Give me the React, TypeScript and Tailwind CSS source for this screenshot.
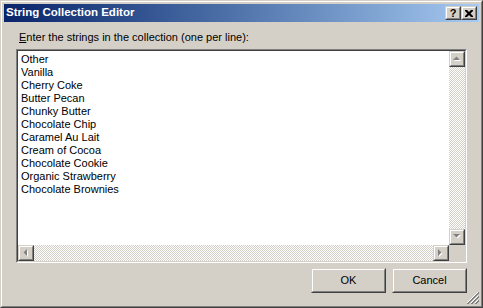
import React from 'react';

const flavors = [
  'Other',
  'Vanilla',
  'Cherry Coke',
  'Butter Pecan',
  'Chunky Butter',
  'Chocolate Chip',
  'Caramel Au Lait',
  'Cream of Cocoa',
  'Chocolate Cookie',
  'Organic Strawberry',
  'Chocolate Brownies',
];

const font = { fontFamily: '"Liberation Sans", Arial, sans-serif' };

function Raised({ className = '', children }: { className?: string; children?: React.ReactNode }) {
  return (
    <div className={`border border-t-[#d4d0c8] border-l-[#d4d0c8] border-r-[#404040] border-b-[#404040] bg-[#d4d0c8] ${className}`}>
      <div className="flex h-full w-full items-center justify-center border border-t-white border-l-white border-r-[#808080] border-b-[#808080]">
        {children}
      </div>
    </div>
  );
}

function Arrow({ dir }: { dir: 'up' | 'down' | 'left' | 'right' }) {
  const pts = {
    up: '0,4 7,4 3.5,0.5',
    down: '0,0 7,0 3.5,3.5',
    left: '4,0 4,7 0.5,3.5',
    right: '0,0 0,7 3.5,3.5',
  }[dir];
  const horiz = dir === 'left' || dir === 'right';
  return (
    <svg width={horiz ? 6 : 9} height={horiz ? 9 : 6} viewBox={horiz ? '0 0 6 9' : '0 0 9 6'}>
      <polygon points={pts} fill="#ffffff" transform="translate(1,1)" />
      <polygon points={pts} fill="#808080" />
    </svg>
  );
}

const checker =
  'bg-[repeating-conic-gradient(#d4d0c8_0%_25%,#ffffff_0%_50%)] bg-[length:2px_2px]';

export default function App() {
  return (
    <div className="h-[308px] w-[483px] overflow-hidden bg-[#d4d0c8] text-[11px] text-black" style={font}>
      <div className="flex h-full w-full flex-col border border-t-[#d4d0c8] border-l-[#d4d0c8] border-r-[#404040] border-b-[#404040]">
        <div className="flex h-full w-full flex-col border border-t-white border-l-white border-r-[#808080] border-b-[#808080] p-[2px]">
          {/* title bar */}
          <div className="flex h-[18px] shrink-0 items-center bg-gradient-to-r from-[#0a246a] to-[#a6caf0] pl-[2px] pr-[2px]">
            <span className="flex-1 text-[11.5px] font-bold leading-none text-white">String Collection Editor</span>
            <Raised className="h-[14px] w-[16px]">
              <span className="text-[11px] font-bold leading-none">?</span>
            </Raised>
            <Raised className="h-[14px] w-[16px]">
              <svg width="8" height="7" viewBox="0 0 8 7">
                <path d="M0 0h2l2 2 2-2h2v1l-2.5 2.5L8 6v1H6L4 5 2 7H0V6l2.5-2.5L0 1z" fill="#000" />
              </svg>
            </Raised>
          </div>

          {/* body */}
          <div className="relative flex flex-1 flex-col px-3 pt-[9px]">
            <div className="h-[13px] pl-[3px] leading-[13px]">
              <span className="underline">E</span>nter the strings in the collection (one per line):
            </div>

            <div className="mt-[5px] h-[214px] border border-t-[#808080] border-l-[#808080] border-r-white border-b-white">
              <div className="grid h-full grid-cols-[1fr_16px] grid-rows-[1fr_16px] border border-t-[#404040] border-l-[#404040] border-r-[#d4d0c8] border-b-[#d4d0c8] bg-white">
                <div className="pl-[3px] pt-[2px] leading-[13px]">
                  {flavors.map((f) => (
                    <div key={f}>{f}</div>
                  ))}
                </div>
                <div className={`flex flex-col ${checker}`}>
                  <Raised className="h-[16px] w-[16px]">
                    <Arrow dir="up" />
                  </Raised>
                  <div className="flex-1" />
                  <Raised className="h-[16px] w-[16px]">
                    <Arrow dir="down" />
                  </Raised>
                </div>
                <div className={`flex ${checker}`}>
                  <Raised className="h-[16px] w-[16px]">
                    <Arrow dir="left" />
                  </Raised>
                  <div className="flex-1" />
                  <Raised className="h-[16px] w-[16px]">
                    <Arrow dir="right" />
                  </Raised>
                </div>
                <div className="bg-[#d4d0c8]" />
              </div>
            </div>

            <div className="mt-[5px] flex justify-end gap-[6px]">
              <Raised className="h-[25px] w-[75px]">OK</Raised>
              <Raised className="h-[25px] w-[75px]">Cancel</Raised>
            </div>

            {/* size grip */}
            <svg className="absolute bottom-0 right-0" width="13" height="13" viewBox="0 0 13 13">
              <path d="M12 1L1 12M12 5L5 12M12 9L9 12" stroke="#ffffff" strokeWidth="1" />
              <path d="M13 1L1 13M13 2L2 13M13 5L5 13M13 6L6 13M13 9L9 13M13 10L10 13" stroke="#808080" strokeWidth="1" />
            </svg>
          </div>
        </div>
      </div>
    </div>
  );
}
